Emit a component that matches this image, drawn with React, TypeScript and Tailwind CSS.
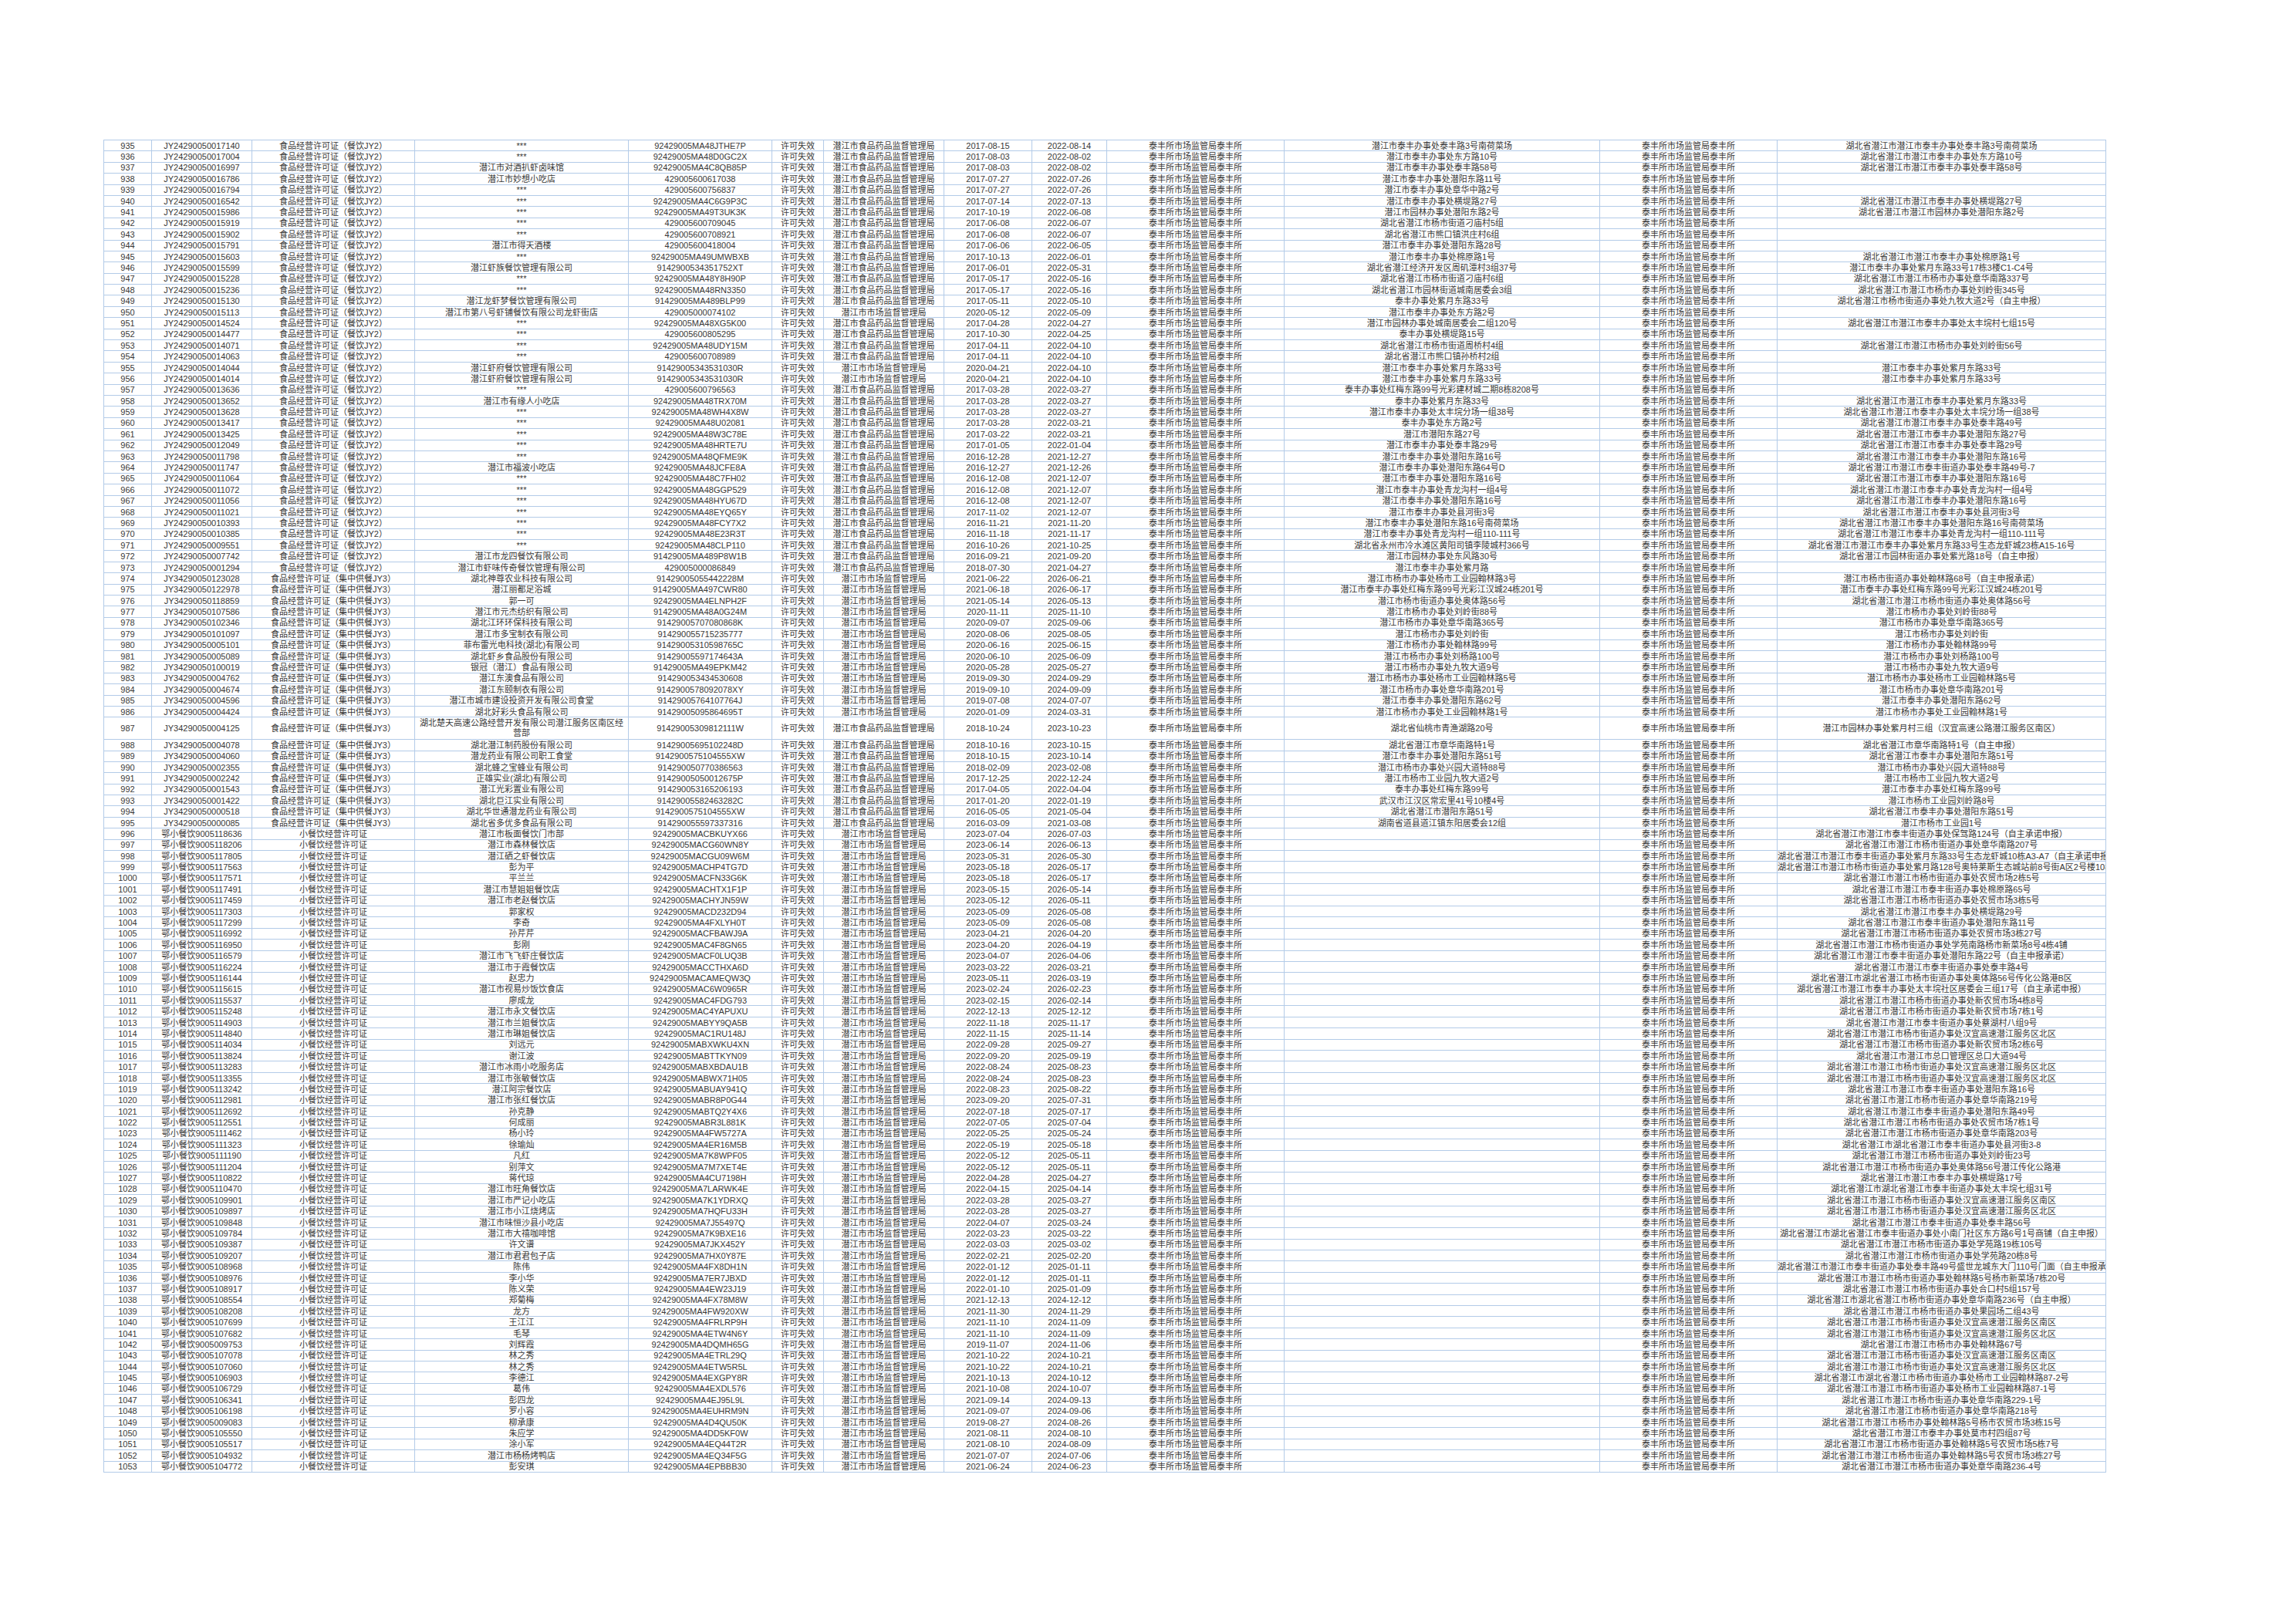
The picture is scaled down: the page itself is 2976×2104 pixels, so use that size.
import React from "react";

const TYPES: Record<string, string> = {
  A: "食品经营许可证（餐饮JY2）",
  B: "食品经营许可证（集中供餐JY3）",
  C: "小餐饮经营许可证",
};
const AUTH: Record<string, string> = {
  F: "潜江市食品药品监督管理局",
  S: "潜江市市场监督管理局",
};
const OFFICE = "泰丰所市场监管局泰丰所";

// code|type|name|credit code|authority|start|end|address 1|address 2
const RAW = `JY24290050017140|A|***|92429005MA48JTHE7P|F|2017-08-15|2022-08-14|潜江市泰丰办事处泰丰路3号南荷菜场|湖北省潜江市潜江市泰丰办事处泰丰路3号南荷菜场
JY24290050017004|A|***|92429005MA48D0GC2X|F|2017-08-03|2022-08-02|潜江市泰丰办事处东方路10号|湖北省潜江市潜江市泰丰办事处东方路10号
JY24290050016997|A|潜江市对酒扒虾卤味馆|92429005MA4C8QB85P|F|2017-08-03|2022-08-02|潜江市泰丰办事处泰丰路58号|湖北省潜江市潜江市泰丰办事处泰丰路58号
JY24290050016786|A|潜江市妙想小吃店|429005600617038|F|2017-07-27|2022-07-26|潜江市泰丰办事处潜阳东路11号|
JY24290050016794|A|***|429005600756837|F|2017-07-27|2022-07-26|潜江市泰丰办事处章华中路2号|
JY24290050016542|A|***|92429005MA4C6G9P3C|F|2017-07-14|2022-07-13|潜江市泰丰办事处横堤路27号|湖北省潜江市潜江市泰丰办事处横堤路27号
JY24290050015986|A|***|92429005MA49T3UK3K|F|2017-10-19|2022-06-08|潜江市园林办事处潜阳东路2号|湖北省潜江市潜江市园林办事处潜阳东路2号
JY24290050015919|A|***|429005600709045|F|2017-06-08|2022-06-07|湖北省潜江市杨市街道刁庙村5组|
JY24290050015902|A|***|429005600708921|F|2017-06-08|2022-06-07|湖北省潜江市熊口镇洪庄村6组|
JY24290050015791|A|潜江市得天酒楼|429005600418004|F|2017-06-06|2022-06-05|潜江市泰丰办事处潜阳东路28号|
JY24290050015603|A|***|92429005MA49UMWBXB|F|2017-10-13|2022-06-01|潜江市泰丰办事处棉原路1号|湖北省潜江市潜江市泰丰办事处棉原路1号
JY24290050015599|A|潜江虾族餐饮管理有限公司|9142900534351752XT|F|2017-06-01|2022-05-31|湖北省潜江经济开发区周矶潭村3组37号|潜江市泰丰办事处紫月东路33号17栋3楼C1-C4号
JY24290050015228|A|***|92429005MA48Y8H90P|F|2017-05-17|2022-05-16|湖北省潜江市杨市街道刁庙村6组|湖北省潜江市潜江市杨市办事处章华南路337号
JY24290050015236|A|***|92429005MA48RN3350|F|2017-05-17|2022-05-16|湖北省潜江市园林街道城南居委会3组|湖北省潜江市潜江市杨市办事处刘岭街345号
JY24290050015130|A|潜江龙虾梦餐饮管理有限公司|91429005MA489BLP99|F|2017-05-11|2022-05-10|泰丰办事处紫月东路33号|湖北省潜江市杨市街道办事处九牧大道2号（自主申报）
JY24290050015113|A|潜江市第八号虾铺餐饮有限公司龙虾街店|429005000074102|S|2020-05-12|2022-05-09|潜江市泰丰办事处东方路2号|
JY24290050014524|A|***|92429005MA48XG5K00|F|2017-04-28|2022-04-27|潜江市园林办事处城南居委会二组120号|湖北省潜江市潜江市泰丰办事处太丰垸村七组15号
JY24290050014477|A|***|429005600805295|F|2017-10-30|2022-04-25|泰丰办事处横堤路15号|
JY24290050014071|A|***|92429005MA48UDY15M|F|2017-04-11|2022-04-10|湖北省潜江市杨市街道周桥村4组|湖北省潜江市潜江市杨市办事处刘岭街56号
JY24290050014063|A|***|429005600708989|F|2017-04-11|2022-04-10|湖北省潜江市熊口镇孙桥村2组|
JY24290050014044|A|潜江虾府餐饮管理有限公司|91429005343531030R|S|2020-04-21|2022-04-10|潜江市泰丰办事处紫月东路33号|潜江市泰丰办事处紫月东路33号
JY24290050014014|A|潜江虾府餐饮管理有限公司|91429005343531030R|S|2020-04-21|2022-04-10|潜江市泰丰办事处紫月东路33号|潜江市泰丰办事处紫月东路33号
JY24290050013636|A|***|429005600796563|F|2017-03-28|2022-03-27|泰丰办事处红梅东路99号光彩建材城二期8栋8208号|
JY24290050013652|A|潜江市有缘人小吃店|92429005MA48TRX70M|F|2017-03-28|2022-03-27|泰丰办事处紫月东路33号|湖北省潜江市潜江市泰丰办事处紫月东路33号
JY24290050013628|A|***|92429005MA48WH4X8W|F|2017-03-28|2022-03-27|潜江市泰丰办事处太丰垸分场一组38号|湖北省潜江市潜江市泰丰办事处太丰垸分场一组38号
JY24290050013417|A|***|92429005MA48U02081|F|2017-03-28|2022-03-21|泰丰办事处东方路2号|湖北省潜江市潜江市泰丰办事处泰丰路49号
JY24290050013425|A|***|92429005MA48W3C78E|F|2017-03-22|2022-03-21|潜江市潜阳东路27号|湖北省潜江市潜江市泰丰办事处潜阳东路27号
JY24290050012049|A|***|92429005MA48HRTE7U|F|2017-01-05|2022-01-04|潜江市泰丰办事处泰丰路29号|湖北省潜江市潜江市泰丰办事处泰丰路29号
JY24290050011798|A|***|92429005MA48QFME9K|F|2016-12-28|2021-12-27|潜江市泰丰办事处潜阳东路16号|湖北省潜江市潜江市泰丰办事处潜阳东路16号
JY24290050011747|A|潜江市福波小吃店|92429005MA48JCFE8A|F|2016-12-27|2021-12-26|潜江市泰丰办事处潜阳东路64号D|湖北省潜江市潜江市泰丰街道办事处泰丰路49号-7
JY24290050011064|A|***|92429005MA48C7FH02|F|2016-12-08|2021-12-07|潜江市泰丰办事处潜阳东路16号|湖北省潜江市潜江市泰丰办事处潜阳东路16号
JY24290050011072|A|***|92429005MA48GGP529|F|2016-12-08|2021-12-07|潜江市泰丰办事处青龙沟村一组4号|湖北省潜江市潜江市泰丰办事处青龙沟村一组4号
JY24290050011056|A|***|92429005MA48HYU67D|F|2016-12-08|2021-12-07|潜江市泰丰办事处潜阳东路16号|湖北省潜江市潜江市泰丰办事处潜阳东路16号
JY24290050011021|A|***|92429005MA48EYQ65Y|F|2017-11-02|2021-12-07|潜江市泰丰办事处县河街3号|湖北省潜江市潜江市泰丰办事处县河街3号
JY24290050010393|A|***|92429005MA48FCY7X2|F|2016-11-21|2021-11-20|潜江市泰丰办事处潜阳东路16号南荷菜场|湖北省潜江市潜江市泰丰办事处潜阳东路16号南荷菜场
JY24290050010385|A|***|92429005MA48E23R3T|F|2016-11-18|2021-11-17|潜江市泰丰办事处青龙沟村一组110-111号|湖北省潜江市潜江市泰丰办事处青龙沟村一组110-111号
JY24290050009551|A|***|92429005MA48CLP110|F|2016-10-26|2021-10-25|湖北省永州市冷水滩区黄阳司镇李陵城村366号|湖北省潜江市潜江市泰丰办事处紫月东路33号生态龙虾城23栋A15-16号
JY24290050007742|A|潜江市龙四餐饮有限公司|91429005MA489P8W1B|F|2016-09-21|2021-09-20|潜江市园林办事处东风路30号|湖北省潜江市园林街道办事处紫光路18号（自主申报）
JY24290050001294|A|潜江市虾味传奇餐饮管理有限公司|429005000086849|F|2018-07-30|2021-04-27|潜江市泰丰办事处紫月路|
JY34290050123028|B|湖北神尊农业科技有限公司|91429005055442228M|S|2021-06-22|2026-06-21|潜江市杨市办事处杨市工业园翰林路3号|潜江市杨市街道办事处翰林路68号（自主申报承诺）
JY34290050122978|B|潜江丽都足浴城|91429005MA497CWR80|S|2021-06-18|2026-06-17|潜江市泰丰办事处红梅东路99号光彩江汉城24栋201号|潜江市泰丰办事处红梅东路99号光彩江汉城24栋201号
JY34290050118859|B|郭一可|92429005MA4ELNPH2F|S|2021-05-14|2026-05-13|潜江市杨市街道办事处奥体路56号|湖北省潜江市潜江市杨市街道办事处奥体路56号
JY34290050107586|B|潜江市元杰纺织有限公司|91429005MA48A0G24M|S|2020-11-11|2025-11-10|潜江市杨市办事处刘岭街88号|潜江市杨市办事处刘岭街88号
JY34290050102346|B|湖北江环环保科技有限公司|91429005707080868K|S|2020-09-07|2025-09-06|潜江市杨市办事处章华南路365号|潜江市杨市办事处章华南路365号
JY34290050101097|B|潜江市多宝制衣有限公司|914290055715235777|S|2020-08-06|2025-08-05|潜江市杨市办事处刘岭街|潜江市杨市办事处刘岭街
JY34290050005101|B|菲布雷光电科技(湖北)有限公司|91429005310598765C|S|2020-06-16|2025-06-15|潜江市杨市办事处翰林路99号|潜江市杨市办事处翰林路99号
JY34290050005089|B|湖北虾乡食品股份有限公司|91429005597174643A|S|2020-06-10|2025-06-09|潜江市杨市办事处刘杨路100号|潜江市杨市办事处刘杨路100号
JY34290050100019|B|银冠（潜江）食品有限公司|91429005MA49EPKM42|S|2020-05-28|2025-05-27|潜江市杨市办事处九牧大道9号|潜江市杨市办事处九牧大道9号
JY34290050004762|B|潜江东澳食品有限公司|914290053434530608|S|2019-09-30|2024-09-29|潜江市杨市办事处杨市工业园翰林路5号|潜江市杨市办事处杨市工业园翰林路5号
JY34290050004674|B|潜江东颐制衣有限公司|9142900578092078XY|S|2019-09-10|2024-09-09|潜江市杨市办事处章华南路201号|潜江市杨市办事处章华南路201号
JY34290050004596|B|潜江市城市建设投资开发有限公司食堂|91429005764107764J|S|2019-07-08|2024-07-07|潜江市泰丰办事处潜阳东路62号|潜江市泰丰办事处潜阳东路62号
JY34290050004424|B|湖北好彩头食品有限公司|91429005095864695T|S|2020-01-09|2024-03-31|潜江市杨市办事处工业园翰林路1号|潜江市杨市办事处工业园翰林路1号
JY34290050004125|B|湖北楚天高速公路经营开发有限公司潜江服务区南区经营部|91429005309812111W|F|2018-10-24|2023-10-23|湖北省仙桃市青渔湖路20号|潜江市园林办事处紫月村三组（汉宜高速公路潜江服务区南区）
JY34290050004078|B|湖北潜江制药股份有限公司|91429005695102248D|F|2018-10-16|2023-10-15|湖北省潜江市章华南路特1号|湖北省潜江市章华南路特1号（自主申报）
JY34290050004060|B|潜龙药业有限公司职工食堂|9142900575104555XW|F|2018-10-15|2023-10-14|潜江市泰丰办事处潜阳东路51号|湖北省潜江市泰丰办事处潜阳东路51号
JY34290050002355|B|湖北蜂之宝蜂业有限公司|914290050770386563|F|2018-02-09|2023-02-08|潜江市杨市办事处兴园大道特88号|潜江市杨市办事处兴园大道特88号
JY34290050002242|B|正雄实业(湖北)有限公司|91429005050012675P|F|2017-12-25|2022-12-24|潜江市杨市工业园九牧大道2号|潜江市杨市工业园九牧大道2号
JY34290050001543|B|潜江光彩置业有限公司|914290053165206193|F|2017-04-05|2022-04-04|泰丰办事处红梅东路99号|潜江市泰丰办事处红梅东路99号
JY34290050001422|B|湖北巨江实业有限公司|91429005582463282C|F|2017-01-20|2022-01-19|武汉市江汉区常宏里41号10楼4号|潜江市杨市工业园刘岭路8号
JY34290050000518|B|湖北华世通潜龙药业有限公司|9142900575104555XW|F|2016-05-05|2021-05-04|湖北省潜江市潜阳东路51号|湖北省潜江市泰丰办事处潜阳东路51号
JY34290050000085|B|湖北省多优多食品有限公司|914290055597337316|F|2016-03-09|2021-03-08|湖南省道县道江镇东阳居委会12组|潜江市杨市工业园1号
鄂小餐饮9005118636|C|潜江市板面餐饮门市部|92429005MACBKUYX66|S|2023-07-04|2026-07-03||湖北省潜江市潜江市泰丰街道办事处保驾路124号（自主承诺申报）
鄂小餐饮9005118206|C|潜江市森林餐饮店|92429005MACG60WN8Y|S|2023-06-14|2026-06-13||湖北省潜江市潜江市杨市街道办事处章华南路207号
鄂小餐饮9005117805|C|潜江硒之虾餐饮店|92429005MACGU09W6M|S|2023-05-31|2026-05-30||湖北省潜江市潜江市泰丰街道办事处紫月东路33号生态龙虾城10栋A3-A7（自主承诺申报）
鄂小餐饮9005117563|C|彭为平|92429005MACHP4TG7D|S|2023-05-18|2026-05-17||湖北省潜江市潜江市杨市街道办事处紫月路128号奥特莱斯生态城站前8号街A区2号楼108号
鄂小餐饮9005117571|C|平兰兰|92429005MACFN33G6K|S|2023-05-18|2026-05-17||湖北省潜江市潜江市杨市街道办事处农贸市场2栋5号
鄂小餐饮9005117491|C|潜江市慧姐姐餐饮店|92429005MACHTX1F1P|S|2023-05-15|2026-05-14||湖北省潜江市潜江市泰丰街道办事处棉原路65号
鄂小餐饮9005117459|C|潜江市老赵餐饮店|92429005MACHYJN59W|S|2023-05-12|2026-05-11||湖北省潜江市潜江市杨市街道办事处农贸市场3栋5号
鄂小餐饮9005117303|C|郭家权|92429005MACD232D94|S|2023-05-09|2026-05-08||湖北省潜江市潜江市泰丰办事处横堤路29号
鄂小餐饮9005117299|C|李奇|92429005MA4FXLYH0T|S|2023-05-09|2026-05-08||湖北省潜江市潜江市泰丰街道办事处潜阳东路11号
鄂小餐饮9005116992|C|孙芹芹|92429005MACFBAWJ9A|S|2023-04-21|2026-04-20||湖北省潜江市潜江市杨市街道办事处农贸市场3栋27号
鄂小餐饮9005116950|C|彭刚|92429005MAC4F8GN65|S|2023-04-20|2026-04-19||湖北省潜江市潜江市杨市街道办事处学苑南路杨市新菜场8号4栋4铺
鄂小餐饮9005116579|C|潜江市飞飞虾庄餐饮店|92429005MACF0LUQ3B|S|2023-04-07|2026-04-06||湖北省潜江市潜江市泰丰街道办事处潜阳东路22号（自主申报承诺）
鄂小餐饮9005116224|C|潜江市于霞餐饮店|92429005MACCTHXA6D|S|2023-03-22|2026-03-21||湖北省潜江市潜江市泰丰街道办事处泰丰路4号
鄂小餐饮9005116144|C|赵忠力|92429005MACAMEQW3Q|S|2023-05-11|2026-03-19||湖北省潜江市湖北省潜江市杨市街道办事处奥体路56号传化公路港B区
鄂小餐饮9005115615|C|潜江市视易炒饭饮食店|92429005MAC6W0965R|S|2023-02-24|2026-02-23||湖北省潜江市潜江市泰丰办事处太丰垸社区居委会三组17号（自主承诺申报）
鄂小餐饮9005115537|C|廖成龙|92429005MAC4FDG793|S|2023-02-15|2026-02-14||湖北省潜江市潜江市杨市街道办事处新农贸市场4栋8号
鄂小餐饮9005115248|C|潜江市永文餐饮店|92429005MAC4YAPUXU|S|2022-12-13|2025-12-12||湖北省潜江市潜江市杨市街道办事处新农贸市场7栋1号
鄂小餐饮9005114903|C|潜江市兰姐餐饮店|92429005MABYY9QA5B|S|2022-11-18|2025-11-17||湖北省潜江市潜江市泰丰街道办事处蔡湖村八组9号
鄂小餐饮9005114840|C|潜江市琳姐餐饮店|92429005MAC1RU148J|S|2022-11-15|2025-11-14||湖北省潜江市潜江市杨市街道办事处汉宜高速潜江服务区北区
鄂小餐饮9005114034|C|刘远元|92429005MABXWKU4XN|S|2022-09-28|2025-09-27||湖北省潜江市潜江市杨市街道办事处新农贸市场2栋6号
鄂小餐饮9005113824|C|谢江波|92429005MABTTKYN09|S|2022-09-20|2025-09-19||湖北省潜江市潜江市总口管理区总口大道94号
鄂小餐饮9005113283|C|潜江市冰雨小吃服务店|92429005MABXBDAU1B|S|2022-08-24|2025-08-23||湖北省潜江市潜江市杨市街道办事处汉宜高速潜江服务区北区
鄂小餐饮9005113355|C|潜江市张敏餐饮店|92429005MABWX71H05|S|2022-08-24|2025-08-23||湖北省潜江市潜江市杨市街道办事处汉宜高速潜江服务区北区
鄂小餐饮9005113242|C|潜江阿宗餐饮店|92429005MABUAY941Q|S|2022-08-23|2025-08-22||湖北省潜江市潜江市泰丰街道办事处潜阳东路16号
鄂小餐饮9005112981|C|潜江市张红餐饮店|92429005MABR8P0G44|S|2023-09-20|2025-07-31||湖北省潜江市潜江市杨市街道办事处章华南路219号
鄂小餐饮9005112692|C|孙克静|92429005MABTQ2Y4X6|S|2022-07-18|2025-07-17||湖北省潜江市潜江市泰丰街道办事处潜阳东路49号
鄂小餐饮9005112551|C|何成丽|92429005MABR3L881K|S|2022-07-05|2025-07-04||湖北省潜江市潜江市杨市街道办事处农贸市场7栋1号
鄂小餐饮9005111462|C|杨小玲|92429005MA4FW5727A|S|2022-05-25|2025-05-24||湖北省潜江市潜江市杨市街道办事处章华南路203号
鄂小餐饮9005111323|C|徐瑜灿|92429005MA4ER16M5B|S|2022-05-19|2025-05-18||湖北省潜江市湖北省潜江市泰丰街道办事处县河街3-8
鄂小餐饮9005111190|C|凡红|92429005MA7K8WPF05|S|2022-05-12|2025-05-11||湖北省潜江市潜江市杨市街道办事处刘岭街23号
鄂小餐饮9005111204|C|别萍文|92429005MA7M7XET4E|S|2022-05-12|2025-05-11||湖北省潜江市潜江市杨市街道办事处奥体路56号潜江传化公路港
鄂小餐饮9005110822|C|蒋代琼|92429005MA4CU7198H|S|2022-04-28|2025-04-27||湖北省潜江市潜江市泰丰办事处横堤路17号
鄂小餐饮9005110470|C|潜江市旺角餐饮店|92429005MA7LARWK4E|S|2022-04-15|2025-04-14||湖北省潜江市湖北省潜江市泰丰街道办事处太丰垸七组31号
鄂小餐饮9005109901|C|潜江市严记小吃店|92429005MA7K1YDRXQ|S|2022-03-28|2025-03-27||湖北省潜江市潜江市杨市街道办事处汉宜高速潜江服务区南区
鄂小餐饮9005109897|C|潜江市小江烧烤店|92429005MA7HQFU33H|S|2022-03-28|2025-03-27||湖北省潜江市潜江市杨市街道办事处汉宜高速潜江服务区北区
鄂小餐饮9005109848|C|潜江市味恒沙县小吃店|92429005MA7J55497Q|S|2022-04-07|2025-03-24||湖北省潜江市潜江市泰丰街道办事处泰丰路56号
鄂小餐饮9005109784|C|潜江市大禧咖啡馆|92429005MA7K9BXE16|S|2022-03-23|2025-03-22||湖北省潜江市湖北省潜江市泰丰街道办事处小南门社区东方路6号1号商铺（自主申报）
鄂小餐饮9005109387|C|许文谱|92429005MA7JKX452Y|S|2022-03-03|2025-03-02||湖北省潜江市潜江市杨市街道办事处学苑路19栋105号
鄂小餐饮9005109207|C|潜江市君君包子店|92429005MA7HX0Y87E|S|2022-02-21|2025-02-20||湖北省潜江市潜江市杨市街道办事处学苑路20栋8号
鄂小餐饮9005108968|C|陈伟|92429005MA4FX8DH1N|S|2022-01-12|2025-01-11||湖北省潜江市潜江市泰丰街道办事处泰丰路49号盛世龙城东大门110号门面（自主申报承诺）
鄂小餐饮9005108976|C|李小华|92429005MA7ER7JBXD|S|2022-01-12|2025-01-11||湖北省潜江市潜江市杨市街道办事处翰林路5号杨市新菜场7栋20号
鄂小餐饮9005108917|C|陈义荣|92429005MA4EW23J19|S|2022-01-10|2025-01-09||湖北省潜江市潜江市杨市街道办事处合口村5组157号
鄂小餐饮9005108554|C|郑菊梅|92429005MA4FX78M8W|S|2021-12-13|2024-12-12||湖北省潜江市湖北省潜江市杨市街道办事处章华南路236号（自主申报）
鄂小餐饮9005108208|C|龙方|92429005MA4FW920XW|S|2021-11-30|2024-11-29||湖北省潜江市潜江市杨市街道办事处果园场二组43号
鄂小餐饮9005107699|C|王江江|92429005MA4FRLRP9H|S|2021-11-10|2024-11-09||湖北省潜江市潜江市杨市街道办事处汉宜高速潜江服务区南区
鄂小餐饮9005107682|C|毛琴|92429005MA4ETW4N6Y|S|2021-11-10|2024-11-09||湖北省潜江市潜江市杨市街道办事处汉宜高速潜江服务区北区
鄂小餐饮9005009753|C|刘辉霞|92429005MA4DQMH65G|S|2019-11-07|2024-11-06||湖北省潜江市潜江市杨市办事处翰林路67号
鄂小餐饮9005107078|C|林之秀|92429005MA4ETRL29Q|S|2021-10-22|2024-10-21||湖北省潜江市潜江市杨市街道办事处汉宜高速潜江服务区南区
鄂小餐饮9005107060|C|林之秀|92429005MA4ETW5R5L|S|2021-10-22|2024-10-21||湖北省潜江市潜江市杨市街道办事处汉宜高速潜江服务区北区
鄂小餐饮9005106903|C|李德江|92429005MA4EXGPY8R|S|2021-10-13|2024-10-12||湖北省潜江市湖北省潜江市杨市街道办事处杨市工业园翰林路87-2号
鄂小餐饮9005106729|C|葛伟|92429005MA4EXDL576|S|2021-10-08|2024-10-07||湖北省潜江市潜江市杨市街道办事处杨市工业园翰林路87-1号
鄂小餐饮9005106341|C|彭四龙|92429005MA4EJ95L9L|S|2021-09-14|2024-09-13||湖北省潜江市潜江市杨市街道办事处章华南路229-1号
鄂小餐饮9005106198|C|罗小容|92429005MA4EUHRM9N|S|2021-09-07|2024-09-06||湖北省潜江市潜江市杨市街道办事处章华南路218号
鄂小餐饮9005009083|C|柳承康|92429005MA4D4QU50K|S|2019-08-27|2024-08-26||湖北省潜江市潜江市杨市办事处翰林路5号杨市农贸市场3栋15号
鄂小餐饮9005105550|C|朱应学|92429005MA4DD5KF0W|S|2021-08-11|2024-08-10||湖北省潜江市潜江市泰丰办事处莫市村四组87号
鄂小餐饮9005105517|C|涂小军|92429005MA4EQ44T2R|S|2021-08-10|2024-08-09||湖北省潜江市潜江市杨市街道办事处翰林路5号农贸市场5栋7号
鄂小餐饮9005104932|C|潜江市杨杨烤鸭店|92429005MA4EQ34F5G|S|2021-07-07|2024-07-06||湖北省潜江市潜江市杨市街道办事处翰林路5号农贸市场3栋27号
鄂小餐饮9005104772|C|彭安琪|92429005MA4EPBBB30|S|2021-06-24|2024-06-23||湖北省潜江市潜江市杨市街道办事处章华南路236-4号`;

const rows = RAW.split("\n").map((line, i) => {
  const [code, type, name, credit, auth, start, end, addr1, addr2] = line.split("|");
  return {
    no: String(935 + i),
    cells: [code, TYPES[type], name, credit, "许可失效", AUTH[auth], start, end, OFFICE, addr1, OFFICE, addr2],
  };
});

const cols = [
  "w-[62px]",
  "w-[130px]",
  "w-[211px]",
  "w-[277px]",
  "w-[186px]",
  "w-[67px]",
  "w-[156px]",
  "w-[114px]",
  "w-[97px]",
  "w-[230px]",
  "w-[409px]",
  "w-[230px]",
  "w-[426px]",
];

function Cell({ text, wrap }: { text: string; wrap?: boolean }) {
  return (
    <td className="border border-[#b3cbe8] p-0 align-middle overflow-hidden">
      <div
        className={
          wrap
            ? "text-center whitespace-normal leading-[13px] px-px"
            : "flex [justify-content:safe_center] whitespace-nowrap overflow-hidden leading-[12px] h-[12px]"
        }
      >
        {text}
      </div>
    </td>
  );
}

export default function App() {
  return (
    <div className="w-[2976px] min-h-[2104px] bg-white pl-[134px] pt-[181px]">
      <table
        className="table-fixed border-collapse w-[2595px] text-[11px] text-[#383838]"
        style={{ fontFamily: '"Liberation Sans", "Noto Sans CJK SC", sans-serif' }}
      >
        <colgroup>
          {cols.map((c, i) => (
            <col key={i} className={c} />
          ))}
        </colgroup>
        <tbody>
          {rows.map((r) => {
            const tall = r.no === "987";
            return (
              <tr key={r.no} className={tall ? "h-[28.8px]" : "h-[14.4px]"}>
                <Cell text={r.no} />
                {r.cells.map((c, j) => (
                  <Cell key={j} text={c} wrap={tall && j === 2} />
                ))}
              </tr>
            );
          })}
        </tbody>
      </table>
    </div>
  );
}
